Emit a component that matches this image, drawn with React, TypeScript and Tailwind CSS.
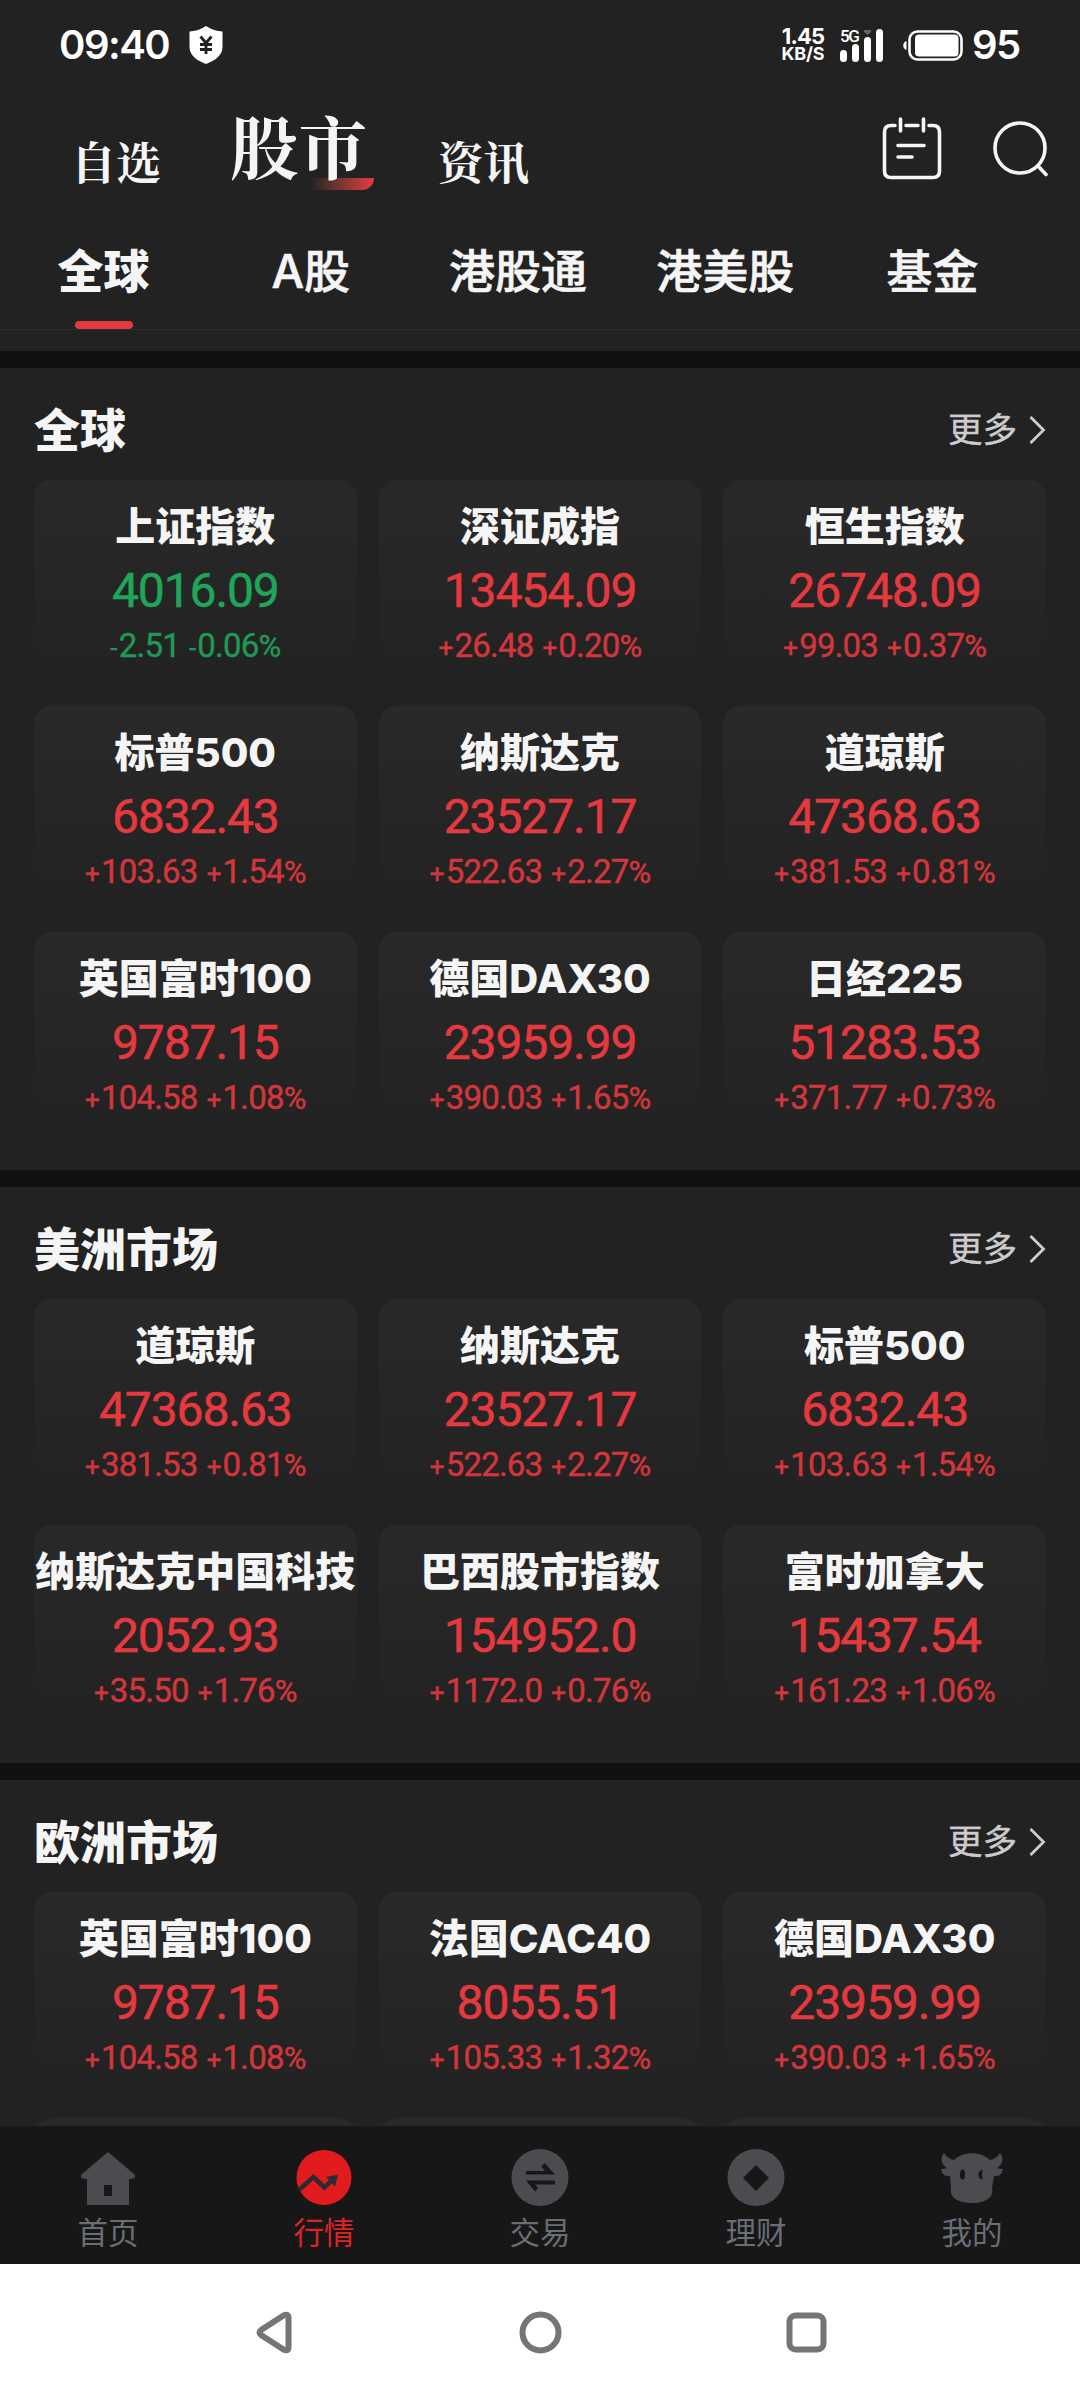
import React from "react";

type Quote = {
    name: string;
    price: string;
    change: string;
    percent: string;
};

type Market = {
    title: string;
    quotes: Quote[];
};

const sse = { name: "上证指数", price: "4016.09", change: "-2.51", percent: "-0.06" };
const szse = { name: "深证成指", price: "13454.09", change: "+26.48", percent: "+0.20" };
const hsi = { name: "恒生指数", price: "26748.09", change: "+99.03", percent: "+0.37" };
const sp500 = { name: "标普500", price: "6832.43", change: "+103.63", percent: "+1.54" };
const nasdaq = { name: "纳斯达克", price: "23527.17", change: "+522.63", percent: "+2.27" };
const dow = { name: "道琼斯", price: "47368.63", change: "+381.53", percent: "+0.81" };
const ftse = { name: "英国富时100", price: "9787.15", change: "+104.58", percent: "+1.08" };
const dax = { name: "德国DAX30", price: "23959.99", change: "+390.03", percent: "+1.65" };
const nikkei = { name: "日经225", price: "51283.53", change: "+371.77", percent: "+0.73" };
const hxc = { name: "纳斯达克中国科技", price: "2052.93", change: "+35.50", percent: "+1.76" };
const brazil = { name: "巴西股市指数", price: "154952.0", change: "+1172.0", percent: "+0.76" };
const canada = { name: "富时加拿大", price: "15437.54", change: "+161.23", percent: "+1.06" };
const cac = { name: "法国CAC40", price: "8055.51", change: "+105.33", percent: "+1.32" };

const markets: Market[] = [
    { title: "全球", quotes: [sse, szse, hsi, sp500, nasdaq, dow, ftse, dax, nikkei] },
    { title: "美洲市场", quotes: [dow, nasdaq, sp500, hxc, brazil, canada] },
    { title: "欧洲市场", quotes: [ftse, cac, dax] },
];

const tabs = ["全球", "A股", "港股通", "港美股", "基金"];

function StatusBar() {
    return (
        <div className="h-[90px] shrink-0 flex items-center justify-between pl-[59px] pr-[60px] text-white">
            <div className="flex items-center gap-[18px]">
                <span className="text-[40px] leading-[40px] font-semibold w-[112px] tracking-[-1.5px] whitespace-nowrap">
                    09:40
                </span>
                <svg width="34" height="38" viewBox="0 0 34 38">
                    <path
                        d="M17 0C12 3.5 6 5 0.5 5.5V21C0.5 30 9 35 17 38C25 35 33.5 30 33.5 21V5.5C28 5 22 3.5 17 0Z"
                        fill="#fff"
                    />
                    <path
                        d="M11.5 10.5L17 17L22.500 10.500M17 17V28M11 18.500H23M11 23.500H23"
                        stroke="#222"
                        strokeWidth="2.800"
                        fill="none"
                    />
                </svg>
            </div>
            <div className="flex items-center">
                <div className="flex flex-col items-center w-[44px] font-bold">
                    <span className="text-[22px] leading-[18px] tracking-[-0.8px]">1.45</span>
                    <span className="text-[18px] leading-[18px] tracking-[-0.2px]">KB/S</span>
                </div>
                <div className="relative w-[43px] h-[33px] ml-[15px]">
                    <span className="absolute left-0 top-0 text-[17px] leading-[14px] font-medium tracking-[-1.5px] font-['Roboto']">
                        5G
                    </span>
                    <svg width="43" height="33" viewBox="0 0 43 33">
                        <g fill="#fff">
                            <rect x="0" y="21" width="7" height="12" rx="3.500" />
                            <rect x="12" y="15" width="7" height="18" rx="3.500" />
                            <rect x="24" y="8" width="7" height="25" rx="3.500" />
                            <rect x="36" y="0" width="7" height="33" rx="3.500" />
                        </g>
                        <path d="M24 1H31V3L27.500 6L24 3Z" fill="#666" />
                    </svg>
                </div>
                <svg className="ml-5" width="60" height="31" viewBox="0 0 60 31">
                    <path d="M3.500 11V20C1 19 0.300 17.500 0.300 15.500C0.300 13.500 1 12 3.500 11Z" fill="#fff" />
                    <rect x="6.500" y="1.500" width="52" height="28" rx="8" fill="none" stroke="#fff" strokeWidth="2.600" />
                    <rect x="12" y="4.500" width="43.500" height="22" rx="4" fill="#fff" />
                </svg>
                <span className="text-[40px] leading-[40px] font-semibold ml-[9px] w-[48px] tracking-[-1.500px]">
                    95
                </span>
            </div>
        </div>
    );
}

function Header() {
    return (
        <div className="h-[124px] shrink-0 flex justify-between pl-[71px] pr-[32px] text-[#f5f5f5] font-['Noto_Serif_CJK_SC','Noto_Serif_SC','Liberation_Serif','Noto_Sans_CJK_SC',serif] font-bold">
            <div className="flex whitespace-nowrap">
                <span className="text-[45px] leading-[60px] pt-[41px] w-[90px]">自选</span>
                <div className="relative ml-[69px] pt-[12px] w-[144px]">
                    <div className="absolute left-[80px] top-[88px] w-[64px] h-[12px] rounded-br-[14px] bg-linear-to-r from-[#222222] to-[#e6393f]" />
                    <span className="relative text-[68.500px] leading-[86px]">股市</span>
                </div>
                <span className="text-[45.500px] leading-[60px] pt-[41px] ml-[64px]">资讯</span>
            </div>
            <div className="flex gap-[50px] pt-[26px]">
                <svg width="60" height="64" viewBox="0 0 60 64" fill="none" stroke="#f5f5f5" strokeWidth="3.600" strokeLinecap="round">
                    <path d="M13 9.500H9Q2.500 9.500 2.500 16V55Q2.500 61.500 9 61.500H51Q57.500 61.500 57.500 55V16Q57.500 9.500 51 9.500H47M24 9.500H36" />
                    <path d="M18.500 3V15M41.500 3V15M16 29.500H42M16 41H30" />
                </svg>
                <svg className="mt-[5px]" width="56" height="56" viewBox="0 0 56 56" fill="none" stroke="#f5f5f5" strokeWidth="3.600" strokeLinecap="round">
                    <circle cx="28" cy="27" r="25" />
                    <path d="M46 45L54 53.500" />
                </svg>
            </div>
        </div>
    );
}

function Tabs() {
    return (
        <div className="h-[116px] shrink-0 flex border-b border-[#2e2e2e] text-[#f5f5f5] pr-[44px]">
            {tabs.map((tab, i) => (
                <div key={tab} className="flex-1 flex flex-col items-center justify-between pt-[23px]">
                    <span
                        className={
                            i === 0
                                ? "text-[46px] leading-[68px] font-extrabold"
                                : "text-[46px] leading-[68px] font-medium [-webkit-text-stroke:0.6px_#f5f5f5]"
                        }
                    >
                        {tab}
                    </span>
                    {i === 0 && <div className="w-[58px] h-[8px] rounded-[4px] bg-[#e6393f]" />}
                </div>
            ))}
        </div>
    );
}

function QuoteCard({ quote }: { quote: Quote }) {
    const down = quote.change.startsWith("-");
    return (
        <div
            className={
                down
                    ? "h-[204px] rounded-[18px] bg-linear-to-b from-[#292929] to-[#222222] flex flex-col items-center whitespace-nowrap text-[#1fa65b]"
                    : "h-[204px] rounded-[18px] bg-linear-to-b from-[#292929] to-[#222222] flex flex-col items-center whitespace-nowrap text-[#e6393f]"
            }
        >
            <span className="mt-[17px] h-[60px] text-[40px] leading-[60px] font-extrabold text-[#f5f5f5]">
                {quote.name}
            </span>
            <span className="mt-[4px] text-[48px] leading-[60px] tracking-[-1.1px] font-['Roboto'] [-webkit-text-stroke:0.5px_currentColor]">
                {quote.price}
            </span>
            <Change change={quote.change} percent={quote.percent} />
        </div>
    );
}

function Change({ change, percent }: { change: string; percent: string }) {
    return (
        <span className="mt-[3px] h-[44px] flex items-baseline text-[33px] leading-[44px] tracking-[-0.800px] font-['Roboto'] [-webkit-text-stroke:0.4px_currentColor] opacity-90">
            <span className="text-[26px] mr-0.5">{change[0]}</span>
            <span>{change.slice(1)}</span>
            <span className="text-[26px] ml-[9px] mr-0.5">{percent[0]}</span>
            <span>{percent.slice(1)}</span>
            <span className="text-[31px]">%</span>
        </span>
    );
}

function MarketSection({ market }: { market: Market }) {
    return (
        <section className="shrink-0 border-t-[17px] border-[#111111] px-[34px] pb-[34px]">
            <div className="h-[112px] flex items-center justify-between">
                <h2 className="text-[46px] leading-[68px] font-extrabold text-[#f5f5f5] pt-[12px]">
                    {market.title}
                </h2>
                <div className="flex items-center gap-[12px] text-[#cccccc] pt-3">
                    <span className="text-[34.500px] leading-[50px] [-webkit-text-stroke:0.4px_#cccccc]">更多</span>
                    <svg width="17" height="28" viewBox="0 0 17 28" fill="none" stroke="#ccc" strokeWidth="2.800">
                        <path d="M1.500 1L14.500 14L1.500 27" />
                    </svg>
                </div>
            </div>
            <div className="grid grid-cols-3 gap-[22px]">
                {market.quotes.map((quote) => (
                    <QuoteCard key={quote.name} quote={quote} />
                ))}
                {market.quotes.length === 3 &&
                    [0, 1, 2].map((i) => (
                        <div key={i} className="h-[204px] rounded-[18px] bg-linear-to-b from-[#292929] to-[#222222]" />
                    ))}
            </div>
        </section>
    );
}

function HomeIcon() {
    return (
        <svg width="62" height="60" viewBox="0 0 62 60">
            <path
                fillRule="evenodd"
                d="M31 4L57 26Q59 28 57 30L55 31H52V57H10V31H7L4.500 30Q3 28 5 26ZM27 37V48H35V37Z"
                fill="#4b4b50"
            />
        </svg>
    );
}

function TrendIcon() {
    return (
        <svg width="62" height="60" viewBox="0 0 62 60">
            <circle cx="31" cy="29.500" r="27.500" fill="#e11b1e" />
            <path d="M6 42L20.500 29L31.500 39.500L41 30" fill="none" stroke="#2e2a34" strokeWidth="4.500" />
            <path d="M33 29L45 26.500L42 38.500Z" fill="#2e2a34" />
        </svg>
    );
}

function TradeIcon() {
    return (
        <svg width="62" height="60" viewBox="0 0 62 60">
            <circle cx="31" cy="29.500" r="28.500" fill="#4b4b50" />
            <path
                d="M17 23H36L32.500 18.500L35.500 15L46 26.500H17ZM46 36.500H26L29 40L26 43.500L17 32.500H46Z"
                fill="#171717"
            />
        </svg>
    );
}

function WealthIcon() {
    return (
        <svg width="62" height="60" viewBox="0 0 62 60">
            <circle cx="31" cy="29.500" r="28.500" fill="#4b4b50" />
            <path d="M31 17L44 30L31 43L18 30Z" fill="#171717" />
        </svg>
    );
}

function BullIcon() {
    return (
        <svg width="62" height="60" viewBox="0 0 62 60">
            <path
                d="M3 5C-1 10 0 17 6 20Q3 21 0 21Q1 29 9 28L10 40C8 50 18 55 31 55S53 50 51 40L53 28Q61 29 62 21Q59 21 56 20C62 17 63 10 59 5C57 8 54 11 49 12C40 3 22 3 13 12C8 11 5 8 3 5Z"
                fill="#4b4b50"
            />
            <ellipse cx="21.500" cy="26.500" rx="2.500" ry="5" fill="#171717" />
            <path d="M42 22C36 21.500 36 31.500 42 31.500C40.500 28.500 40.500 25 42 22Z" fill="#171717" />
        </svg>
    );
}

const navItems = [
    { label: "首页", icon: <HomeIcon /> },
    { label: "行情", icon: <TrendIcon /> },
    { label: "交易", icon: <TradeIcon /> },
    { label: "理财", icon: <WealthIcon /> },
    { label: "我的", icon: <BullIcon /> },
];

function BottomNav() {
    return (
        <nav className="h-[138px] shrink-0 flex bg-[#171717]">
            {navItems.map((item) => (
                <div key={item.label} className="flex-1 flex flex-col items-center gap-0.5 pt-[22px]">
                    {item.icon}
                    <span
                        className={
                            item.label === "行情"
                                ? "text-[30.500px] leading-[46px] text-[#dc2427]"
                                : "text-[30.500px] leading-[46px] text-[#696d75]"
                        }
                    >
                        {item.label}
                    </span>
                </div>
            ))}
        </nav>
    );
}

function SystemNav() {
    return (
        <div className="h-[136px] shrink-0 bg-white flex items-center justify-center gap-[220px]">
            <svg width="46" height="46" viewBox="0 0 46 46" fill="none" stroke="#757575" strokeWidth="6" strokeLinejoin="round">
                <path d="M32.500 6.500L10 21Q7 23.500 10 26L32.500 40.500Q37.500 43 37.500 38V9Q37.500 4 32.500 6.500Z" />
            </svg>
            <svg width="46" height="46" viewBox="0 0 46 46" fill="none" stroke="#757575" strokeWidth="6">
                <circle cx="23.500" cy="23.500" r="18" />
            </svg>
            <svg width="46" height="46" viewBox="0 0 46 46" fill="none" stroke="#757575" strokeWidth="6">
                <rect x="6.500" y="6.500" width="34" height="34" rx="6" />
            </svg>
        </div>
    );
}

export default function App() {
    return (
        <div className="w-[1080px] h-[2400px] overflow-hidden flex flex-col bg-[#222222] font-['Inter','Noto_Sans_CJK_SC',sans-serif]">
            <StatusBar />
            <Header />
            <Tabs />
            <main className="flex-1 min-h-0 overflow-hidden flex flex-col pt-[21px]">
                {markets.map((market) => (
                    <MarketSection key={market.title} market={market} />
                ))}
            </main>
            <BottomNav />
            <SystemNav />
        </div>
    );
}
